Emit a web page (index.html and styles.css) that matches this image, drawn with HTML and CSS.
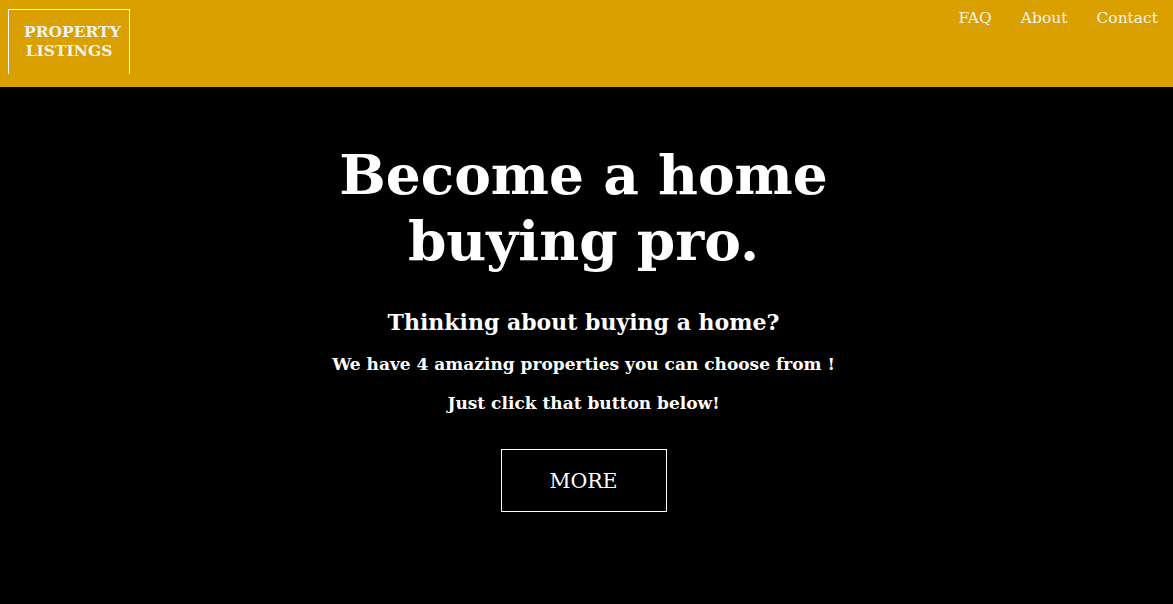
FILE: index.html
```html
<!DOCTYPE html>
<html lang="en">
<head>
<meta charset="utf-8">
<title>Property Listings</title>
<link rel="stylesheet" href="styles.css">
</head>
<body>
<header class="topbar">
  <div class="logo">PROPERTY<br>LISTINGS</div>
  <nav class="nav">
    <a href="#">FAQ</a>
    <a href="#">About</a>
    <a href="#">Contact</a>
  </nav>
</header>
<main class="hero">
  <h1 class="title">Become a home<br>buying pro.</h1>
  <h2 class="sub">Thinking about buying a home?</h2>
  <p class="line">We have 4 amazing properties you can choose from !</p>
  <p class="line">Just click that button below!</p>
  <a class="more" href="#">MORE</a>
</main>
</body>
</html>
```
FILE: styles.css
```css
html, body {
  margin: 0;
  padding: 0;
  background: #000;
  font-family: "DejaVu Serif", serif;
  color: #fff;
}
.topbar {
  height: 87px;
  background: #daa000;
  display: flex;
  justify-content: space-between;
  align-items: flex-start;
  box-sizing: border-box;
  padding: 9px 0 0 8px;
}
.logo {
  width: 122px;
  height: 65px;
  box-sizing: border-box;
  border: 1px solid #fff;
  border-bottom: none;
  color: #f2f2f2;
  font-weight: bold;
  font-size: 15.5px;
  line-height: 19px;
  text-align: center;
  white-space: nowrap;
  padding: 12px 15px 0 15px;
}
.nav {
  display: flex;
  gap: 29px;
  padding: 0 15px 0 0;
}
.nav a {
  color: #f2f2f2;
  text-decoration: none;
  font-size: 15.5px;
  line-height: 18px;
}
.hero {
  display: flex;
  flex-direction: column;
  align-items: center;
  text-align: center;
  padding: 55px 6px 0 0;
}
.title {
  margin: 0;
  font-size: 55px;
  line-height: 66px;
  font-weight: bold;
}
.sub {
  margin: 35px 0 0;
  font-size: 22px;
  font-weight: bold;
}
.line {
  margin: 19px 0 0;
  font-size: 17px;
  font-weight: bold;
}
.more {
  margin-top: 36px;
  width: 166px;
  height: 63px;
  box-sizing: border-box;
  border: 1px solid #fff;
  display: flex;
  align-items: center;
  justify-content: center;
  color: #fff;
  text-decoration: none;
  font-size: 20.5px;
}
```
